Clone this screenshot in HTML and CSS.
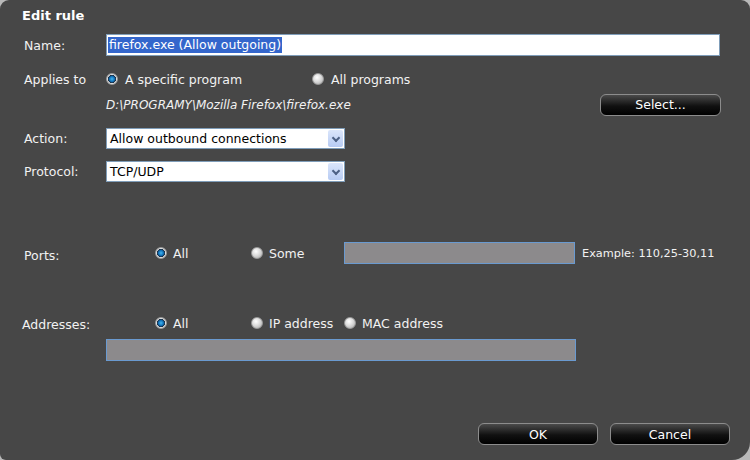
FILE: index.html
```html
<!DOCTYPE html>
<html lang="en">
<head>
    <meta charset="UTF-8">
    <title>Edit rule</title>
    <link rel="stylesheet" href="styles.css">
</head>
<body>
    <div class="dialog">
        <h1 class="title">Edit rule</h1>

        <div class="row row-name">
            <label class="label">Name:</label>
            <div class="textbox"><span class="selected">firefox.exe (Allow outgoing)</span></div>
        </div>

        <div class="row row-applies">
            <span class="label">Applies to</span>
            <span class="radio checked"></span><span class="opt opt-wide">A specific program</span>
            <span class="radio"></span><span class="opt">All programs</span>
        </div>

        <div class="row row-path">
            <span class="path">D:\PROGRAMY\Mozilla Firefox\firefox.exe</span>
            <button class="btn btn-select">Select...</button>
        </div>

        <div class="row row-action">
            <label class="label">Action:</label>
            <div class="combo"><span>Allow outbound connections</span><span class="arrow"></span></div>
        </div>

        <div class="row row-protocol">
            <label class="label">Protocol:</label>
            <div class="combo"><span>TCP/UDP</span><span class="arrow"></span></div>
        </div>

        <div class="row row-ports">
            <span class="label">Ports:</span>
            <div class="choices">
                <div class="choice c1"><span class="radio checked"></span>All</div>
                <div class="choice c2"><span class="radio"></span>Some</div>
            </div>
            <div class="field field-ports"></div>
            <span class="hint">Example: 110,25-30,11</span>
        </div>

        <div class="row row-addr">
            <span class="label">Addresses:</span>
            <div class="choices">
                <div class="choice c1"><span class="radio checked"></span>All</div>
                <div class="choice c2"><span class="radio"></span>IP address</div>
                <div class="choice"><span class="radio"></span>MAC address</div>
            </div>
        </div>
        <div class="row row-addr-field">
            <div class="field field-addr"></div>
        </div>

        <div class="row row-buttons">
            <button class="btn">OK</button>
            <button class="btn">Cancel</button>
        </div>
    </div>
</body>
</html>
```

FILE: styles.css
```css
html, body {
    margin: 0;
    padding: 0;
    background: #b9b9b9;
}
.dialog {
    width: 750px;
    height: 460px;
    background: #474747;
    border-radius: 9px 9px 18px 6px;
    color: #f2f2f2;
    font-family: "DejaVu Sans", Verdana, sans-serif;
    font-size: 12.5px;
    overflow: hidden;
}
.title {
    margin: 0;
    height: 32px;
    line-height: 32px;
    padding-left: 22px;
    font-size: 13px;
    font-weight: bold;
    color: #fff;
}
.row {
    display: flex;
    align-items: center;
}
.label {
    width: 82px;
    padding-left: 24px;
    flex-shrink: 0;
}
.row-name { margin-top: 2px; height: 22px; }
.textbox {
    width: 611px;
    height: 20px;
    background: #fff;
    border: 1px solid #7f9db9;
    display: flex;
    align-items: center;
    padding-left: 1px;
    color: #000;
}
.selected {
    background: #3366cc;
    color: #fff;
    padding: 0 1px;
    line-height: 16px;
}
.row-applies { margin-top: 13px; height: 20px; }
.opt { margin-left: 7px; }
.opt-wide { width: 187px; }
.row-path { margin-top: 5px; height: 21px; padding-left: 106px; }
.path {
    font-style: italic;
    font-size: 12px;
    width: 494px;
}
.btn {
    width: 120px;
    height: 22px;
    border: 1px solid #8c8c8c;
    border-radius: 6px;
    background: linear-gradient(#4a4a4a, #111 55%, #000);
    color: #fff;
    font-family: inherit;
    font-size: 12.5px;
    padding: 0;
}
.btn-select { width: 121px; height: 22px; }
.row-action { margin-top: 13px; height: 21px; }
.row-protocol { margin-top: 12px; height: 21px; }
.combo {
    width: 234px;
    height: 19px;
    background: #fff;
    border: 1px solid #7f9db9;
    color: #000;
    display: flex;
    align-items: center;
    justify-content: space-between;
    padding-left: 3px;
}
.arrow {
    width: 15px;
    height: 17px;
    margin-right: 1px;
    background: linear-gradient(#dbe6fb, #b7cbf3);
    border-radius: 2px;
    position: relative;
}
.arrow::after {
    content: "";
    position: absolute;
    left: 5px;
    top: 5px;
    width: 4px;
    height: 4px;
    border-right: 2px solid #4d6185;
    border-bottom: 2px solid #4d6185;
    transform: rotate(45deg);
}
.radio {
    display: inline-block;
    width: 12px;
    height: 12px;
    border-radius: 50%;
    border: 1px solid #9a9a9a;
    background: radial-gradient(circle at 40% 35%, #ffffff, #dcdcdc 45%, #a6a6a6);
    box-sizing: border-box;
    flex-shrink: 0;
}
.radio.checked {
    background: radial-gradient(circle, #45b8f2 0, #0f6eb5 2.6px, #1a2c40 3.8px, #e4e4e4 4.4px, #a8a8a8);
}
.row-ports { margin-top: 60px; height: 22px; }
.row-ports .label { padding-top: 4px; }
.choices {
    display: flex;
    padding-left: 49px;
}
.choice {
    display: flex;
    align-items: center;
    gap: 6px;
}
.choice.c1 { width: 96px; }
.choice.c2 { width: 93px; }
.row-ports .choices { width: 189px; }
.field {
    height: 20px;
    background: #8c8a8c;
    border: 1px solid #6a9ad0;
}
.field-ports { width: 229px; }
.hint {
    margin-left: 7px;
    font-size: 11.3px;
}
.row-addr { margin-top: 49px; height: 20px; }
.row-addr .label { padding-left: 22px; width: 84px; padding-top: 2px; }
.row-addr-field { margin-top: 6px; padding-left: 106px; }
.field-addr { width: 468px; }
.row-buttons {
    margin-top: 62px;
    padding-left: 478px;
    gap: 12px;
}
```
